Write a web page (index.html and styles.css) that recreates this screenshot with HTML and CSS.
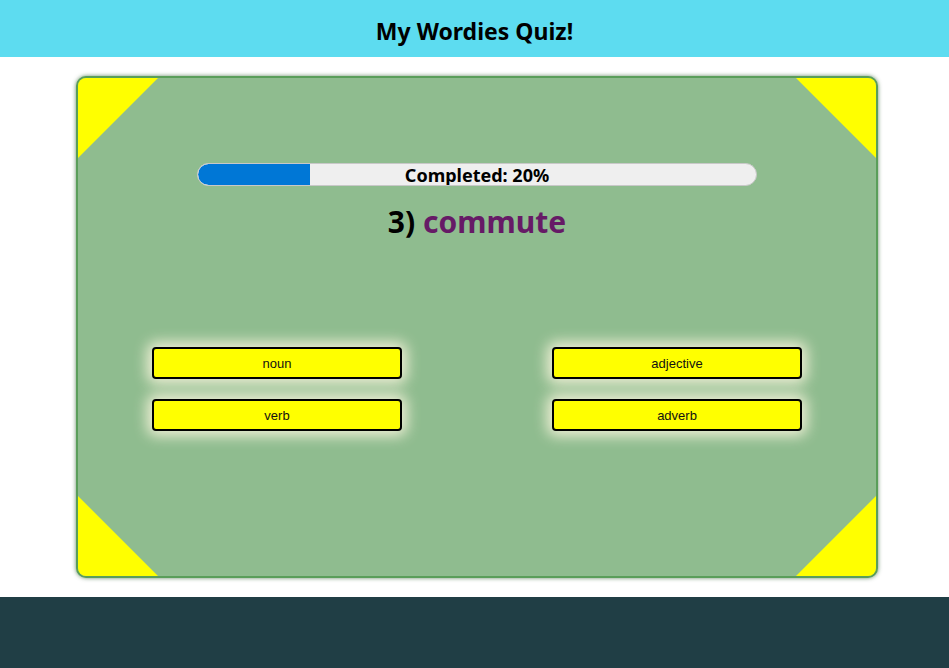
FILE: index.html
```html
<!DOCTYPE html>
<html>
<head>
<meta charset="utf-8">
<link rel="stylesheet" href="styles.css">
</head>
<body>
<header class="topbar"><h1 class="title">My Wordies Quiz!</h1></header>
<main class="card">
  <span class="corner tl"></span>
  <span class="corner tr"></span>
  <span class="corner bl"></span>
  <span class="corner br"></span>
  <div class="progress">
    <div class="progress-fill" style="width:20%"></div>
    <span class="progress-text">Completed: 20%</span>
  </div>
  <h2 class="question">3) <span class="word">commute</span></h2>
  <div class="answers">
    <button class="answer">noun</button>
    <button class="answer">adjective</button>
    <button class="answer">verb</button>
    <button class="answer">adverb</button>
  </div>
</main>
<footer class="footer"></footer>
</body>
</html>
```

FILE: styles.css
```css
* { box-sizing: border-box; }
html, body { margin: 0; padding: 0; background: #fff; }
body { font-family: "Noto Sans", "Open Sans", sans-serif; height: 668px; overflow: hidden; }
.topbar {
  height: 57px;
  background: #5ddcf0;
  display: flex;
  align-items: center;
  justify-content: center;
}
.title {
  margin: 0;
  font-size: 23px;
  font-weight: 700;
  color: #000;
  padding-top: 4px;
}
.card {
  position: relative;
  overflow: hidden;
  width: 802px;
  height: 502px;
  margin: 19px 0 19px 76px;
  background: #8fbc8f;
  border: 2px solid #5a9e5a;
  border-radius: 10px;
  box-shadow: 0 0 4px rgba(40, 90, 40, 0.7);
  padding-top: 85px;
}
.corner { position: absolute; width: 80px; height: 80px; background: #ff0; }
.corner.tl { top: 0; left: 0; clip-path: polygon(0 0, 100% 0, 0 100%); }
.corner.tr { top: 0; right: 0; clip-path: polygon(0 0, 100% 0, 100% 100%); }
.corner.bl { bottom: 0; left: 0; clip-path: polygon(0 0, 100% 100%, 0 100%); }
.corner.br { bottom: 0; right: 0; clip-path: polygon(100% 0, 100% 100%, 0 100%); }
.progress {
  position: relative;
  width: 560px;
  height: 23px;
  margin: 0 auto 0 119px;
  background: #efefef;
  border: 1px solid #c8c8c8;
  border-radius: 12px;
  overflow: hidden;
  display: flex;
  align-items: center;
  justify-content: center;
}
.progress-fill {
  position: absolute;
  left: 0; top: 0; bottom: 0;
  background: #0077d6;
  border-radius: 12px 0 0 12px;
}
.progress-text {
  position: relative;
  font-size: 18px;
  font-weight: 700;
  color: #000;
  line-height: 1;
}
.question {
  margin: 16px 0 0;
  text-align: center;
  font-size: 30px;
  font-weight: 700;
  line-height: 40px;
  color: #000;
}
.word { color: #661a66; }
.answers {
  display: grid;
  grid-template-columns: 400px 400px;
  row-gap: 20px;
  margin: 105px 0 0 -1px;
}
.answer {
  justify-self: center;
  width: 250px;
  height: 32px;
  background: #ff0;
  border: 2px solid #000;
  border-radius: 4px;
  box-shadow: 0 0 14px 5px rgba(255, 248, 225, 0.85);
  font-family: "Liberation Sans", Arial, sans-serif;
  font-size: 13px;
  color: #111;
  padding: 0;
}
.footer {
  height: 71px;
  background: #203e45;
}
```
